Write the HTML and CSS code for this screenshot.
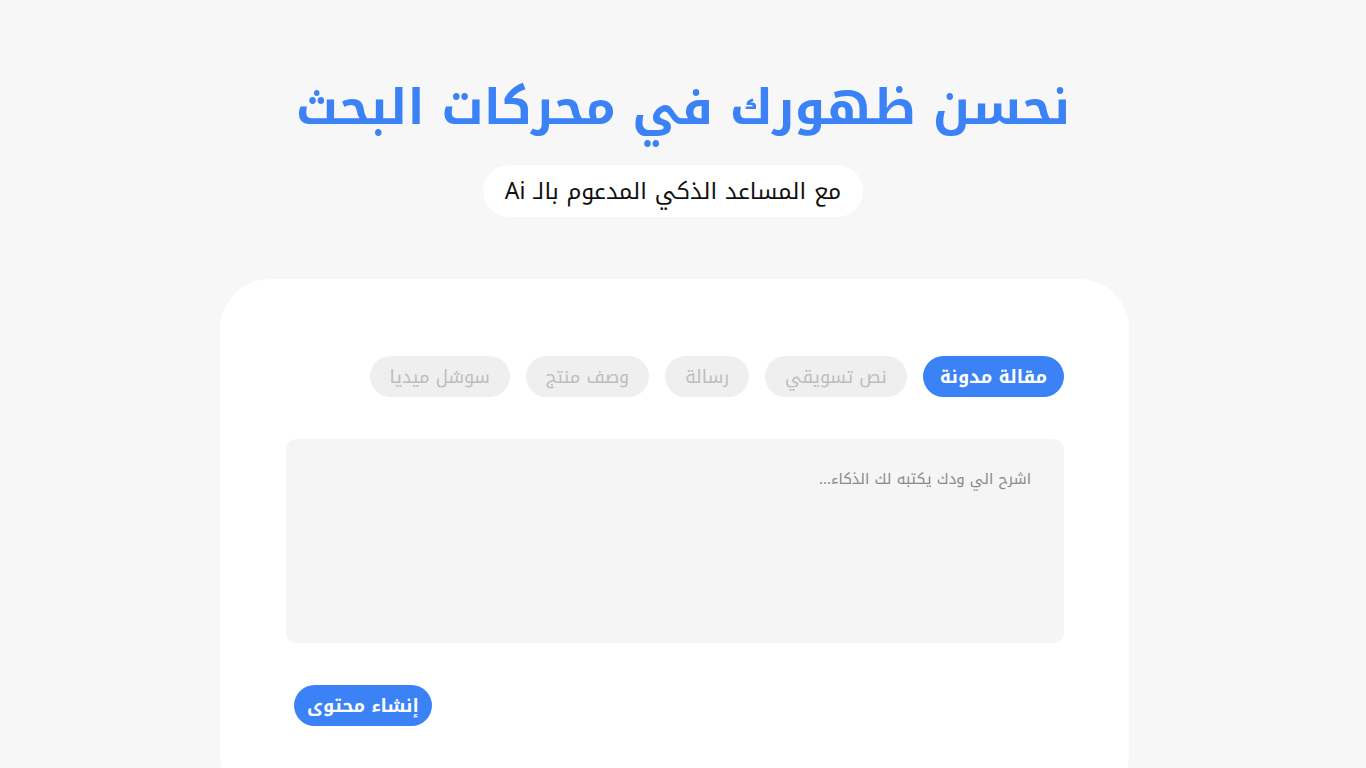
FILE: index.html
```html
<!DOCTYPE html>
<html lang="ar" dir="rtl">
<head>
    <meta charset="UTF-8">
    <title>نحسن ظهورك في محركات البحث</title>
    <link rel="stylesheet" href="styles.css">
</head>
<body>
    <div class="page">
        <header class="hero">
            <h1>نحسن ظهورك في محركات البحث</h1>
            <p class="tagline">مع المساعد الذكي المدعوم بالـ Ai</p>
        </header>

        <main class="card">
            <div class="tabs">
                <button class="tab active">مقالة مدونة</button>
                <button class="tab">نص تسويقي</button>
                <button class="tab">رسالة</button>
                <button class="tab">وصف منتج</button>
                <button class="tab">سوشل ميديا</button>
            </div>

            <textarea class="prompt" placeholder="اشرح الي ودك يكتبه لك الذكاء..."></textarea>

            <div class="actions">
                <button class="generate">إنشاء محتوى</button>
            </div>
        </main>
    </div>
</body>
</html>
```

FILE: styles.css
```css
body {
    margin: 0;
    background-color: #f7f7f7;
    font-family: "Noto Kufi Arabic", "Noto Sans Arabic", "DejaVu Sans", sans-serif;
    color: #111;
}
.page {
    padding-top: 72px;
    display: flex;
    flex-direction: column;
    align-items: center;
}
.hero {
    display: flex;
    flex-direction: column;
    align-items: center;
}
h1 {
    margin: 0 0 21px;
    font-size: 49px;
    line-height: 72px;
    font-weight: 700;
    color: #3b82f6;
}
/* pill and card sit slightly left of center */
.tagline {
    margin: 0 20px 0 0;
    height: 52px;
    padding: 0 22px;
    display: flex;
    align-items: center;
    background: white;
    border-radius: 26px;
    font-size: 23px;
}
.card {
    margin: 62px 17px 0 0;
    width: 909px;
    box-sizing: border-box;
    padding: 77px 65px 80px 66px;
    background: white;
    border-radius: 50px;
}
.tabs {
    display: flex;
    gap: 16px;
}
.tab {
    height: 41px;
    padding: 0 20px;
    border: none;
    border-radius: 21px;
    background: #efefef;
    color: #bdbdbd;
    font-family: inherit;
    font-size: 18px;
    cursor: pointer;
}
.tab.active {
    padding: 0 17px;
    background: #3b82f6;
    color: white;
    font-weight: 700;
}
.prompt {
    display: block;
    width: 100%;
    height: 204px;
    margin-top: 42px;
    box-sizing: border-box;
    padding: 26px 33px;
    border: none;
    border-radius: 10px;
    background: #f5f5f5;
    font-family: inherit;
    font-size: 15px;
    resize: none;
    outline: none;
}
.prompt::placeholder {
    color: #8a8a8a;
}
.actions {
    display: flex;
    justify-content: flex-end;
    margin-top: 42px;
    padding-left: 8px;
}
.generate {
    height: 41px;
    padding: 0 13px;
    border: none;
    border-radius: 21px;
    background: #3b82f6;
    color: white;
    font-family: inherit;
    font-size: 18px;
    font-weight: 700;
    cursor: pointer;
}
```
